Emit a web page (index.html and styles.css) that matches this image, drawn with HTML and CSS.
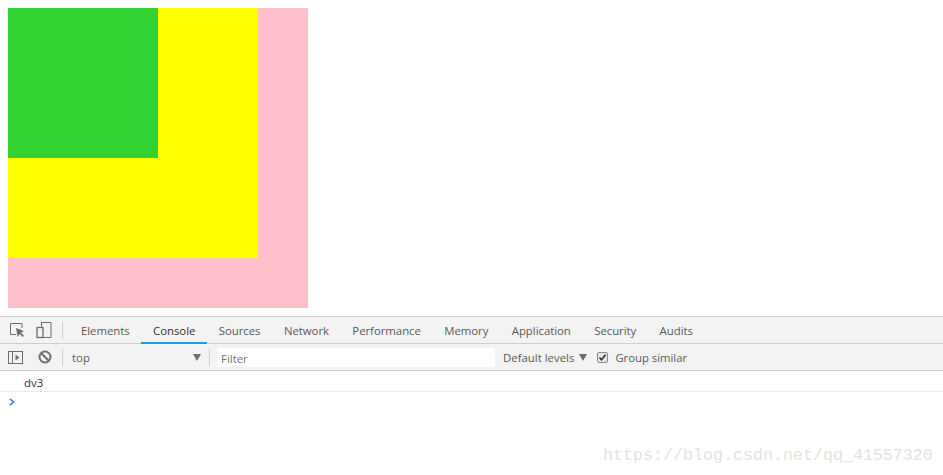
FILE: index.html
```html
<!DOCTYPE html>
<html lang="en">
<head>
<meta charset="utf-8">
<title>Console</title>
<link rel="stylesheet" href="styles.css">
</head>
<body>
<main class="page">
  <div class="dv1"><div class="dv2"><div class="dv3"></div></div></div>
</main>
<section class="devtools">
  <div class="tabbar">
    <div class="icons">
      <svg class="ico" width="16" height="16" viewBox="0 0 16 16"><path d="M6 12.500H0.500V1.500H12V6" fill="none" stroke="#6e6e6e" stroke-width="1"/><path d="M6 6l1.700 9 1.900-3 3.200 3 1.200-1.300-3.100-3 3-1.600z" fill="#6e6e6e"/></svg>
      <svg class="ico" width="16" height="17" viewBox="0 0 16 17"><path d="M5.500 5.500V0.500H15V15.500H6" fill="none" stroke="#6e6e6e"/><rect x="1" y="5.500" width="6" height="10" fill="none" stroke="#6e6e6e" stroke-width="1.300"/></svg>
    </div>
    <span class="sep"></span>
    <nav class="tabs">
      <span class="tab">Elements</span>
      <span class="tab active">Console</span>
      <span class="tab">Sources</span>
      <span class="tab">Network</span>
      <span class="tab">Performance</span>
      <span class="tab">Memory</span>
      <span class="tab">Application</span>
      <span class="tab">Security</span>
      <span class="tab">Audits</span>
    </nav>
  </div>
  <div class="toolbar">
    <div class="icons tools">
      <svg class="ico" width="15" height="13" viewBox="0 0 15 13"><rect x="0.500" y="0.500" width="14" height="12" fill="none" stroke="#6e6e6e"/><path d="M4.500 0.500V12.500" stroke="#6e6e6e"/><path d="M7.500 3.500l4 3-4 3z" fill="#6e6e6e"/></svg>
      <svg class="ico" width="14" height="14" viewBox="0 0 14 14"><circle cx="7" cy="7" r="5.500" fill="none" stroke="#6e6e6e" stroke-width="2"/><path d="M3 3l8 8" stroke="#6e6e6e" stroke-width="2"/></svg>
    </div>
    <span class="sep"></span>
    <div class="context"><span>top</span><i class="arrow"></i></div>
    <span class="sep"></span>
    <div class="filter">Filter</div>
    <div class="levels"><span>Default levels</span><i class="arrow small"></i></div>
    <label class="group"><svg width="11" height="11" viewBox="0 0 11 11"><rect x="0.500" y="0.500" width="10" height="10" rx="1.500" fill="#e6e6e6" stroke="#8a8a8a"/><path d="M2.500 5.500l2 2.300 4-5" fill="none" stroke="#333" stroke-width="1.600"/></svg><span>Group similar</span></label>
  </div>
  <div class="log">dv3</div>
  <div class="prompt"><svg width="6" height="8" viewBox="0 0 6 8"><path d="M1 0.800L4.500 4 1 7.200" fill="none" stroke="#367cf1" stroke-width="1.600"/></svg></div>
</section>
<div class="watermark">https://blog.csdn.net/qq_41557320</div>
</body>
</html>
```
FILE: styles.css
```css
* { box-sizing: border-box; }
html, body { margin: 0; height: 100%; background: #fff; overflow: hidden; }
body { position: relative; font-family: "Open Sans", "Noto Sans", sans-serif; font-size: 11.400px; color: #5a5a5a; }
.page { padding: 8px; height: 316px; }
.dv1 { width: 300px; height: 300px; background: #ffc0cb; }
.dv2 { width: 250px; height: 250px; background: #ffff00; }
.dv3 { width: 150px; height: 150px; background: #32d232; }
.devtools { display: flex; flex-direction: column; }
.tabbar { height: 28px; display: flex; align-items: center; background: #f3f3f3; border-top: 1px solid #cdcdcd; border-bottom: 1px solid #cdcdcd; padding-left: 10px; }
.icons { display: flex; align-items: center; gap: 10px; width: 52px; }
.ico { display: block; flex: none; }
.sep { width: 1px; height: 17px; background: #cfcfcf; flex: none; }
.tabs { display: flex; margin-left: 6px; height: 27px; }
.tab { display: flex; align-items: center; padding: 0 11.700px; height: 27px; color: #5a5a5a; letter-spacing: -0.04px; white-space: nowrap; }
.tab:first-child { padding-left: 12px; }
.tab.active { color: #333; border-bottom: 2px solid #1a9ae8; padding-top: 2px; }
.toolbar { height: 27px; display: flex; align-items: center; background: #f3f3f3; border-bottom: 1px solid #cdcdcd; padding-left: 8px; }
.tools { gap: 15px; width: 46px; margin-right: 8px; }
.context { width: 146px; display: flex; justify-content: space-between; align-items: center; padding: 0 8px 0 9px; }
.arrow { width: 0; height: 0; border-left: 4px solid transparent; border-right: 4px solid transparent; border-top: 7px solid #6e6e6e; display: block; }
.arrow.small { margin-left: 5px; }
.filter { width: 278px; height: 19px; margin-left: 7px; background: #fff; padding: 2px 4px; color: #757575; line-height: 17px; }
.levels { display: flex; align-items: center; margin-left: 8px; }
.group { display: flex; align-items: center; gap: 7px; margin-left: 10px; letter-spacing: -0.05px; }
.log { height: 21px; border-bottom: 1px solid #ececec; padding-left: 24px; line-height: 24px; color: #333; }
.prompt { padding: 6px 0 0 9px; height: 20px; }
.prompt svg { display: block; }
.watermark { position: absolute; left: 603px; top: 445px; font-family: "Liberation Mono", monospace; font-size: 16.670px; line-height: 22px; color: #e3e3de; white-space: nowrap; }
```
